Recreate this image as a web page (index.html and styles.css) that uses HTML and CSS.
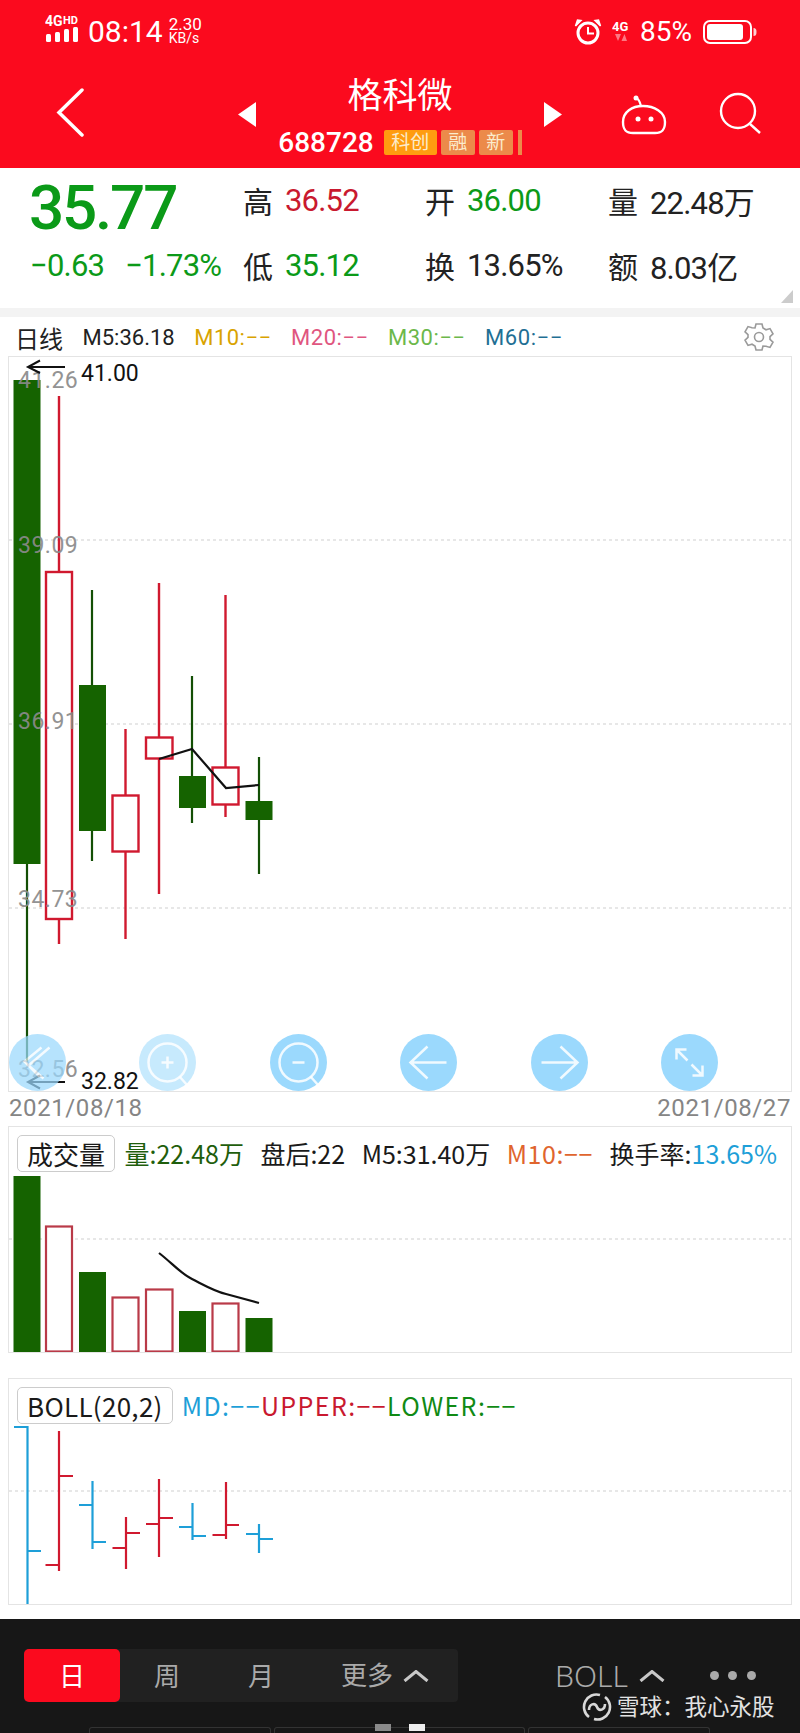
FILE: index.html
```html
<!DOCTYPE html>
<html>
<head>
	<meta charset="utf-8">
	<title>格科微 688728</title>
	<link rel="stylesheet" href="styles.css">
</head>
<body>
<header class="top">
	<div class="status">
		<svg class="signal" width="36" height="28" viewBox="0 0 36 28">
			<text class="sig4g" x="0" y="11">4G</text>
			<text class="sighd" x="18" y="9">HD</text>
			<rect x="1" y="19" width="5" height="8" rx="1.5"/>
			<rect x="10" y="17" width="5" height="10" rx="1.5"/>
			<rect x="19" y="14" width="5" height="13" rx="1.5"/>
			<rect x="28" y="12" width="5" height="15" rx="1.5"/>
		</svg>
		<div class="time">08:14</div>
		<div class="speed"><span>2.30</span><span class="unit">KB/s</span></div>
		<div class="status-right">
			<svg class="alarm" width="28" height="28" viewBox="0 0 28 28">
				<circle cx="14" cy="15" r="10" fill="none" stroke="#fff" stroke-width="3"/>
				<path d="M14 9v6.5h6" fill="none" stroke="#fff" stroke-width="2"/>
				<path d="M1.5 8 7 2.5 3.5 2ZM26.500 8 21 2.500 24.500 2Z" fill="#fff" stroke="#fff" stroke-width="1.500"/>
			</svg>
			<svg class="net" width="18" height="24" viewBox="0 0 18 24">
				<text x="0" y="11">4G</text>
				<path d="M3 14h6l-3 7ZM15 21H9.500l3-7Z" fill="#fff" opacity=".45"/>
			</svg>
			<div class="pct">85%</div>
			<svg class="battery" width="54" height="24" viewBox="0 0 54 24">
				<rect x="1" y="1" width="47" height="22" rx="6" fill="none" stroke="#fff" stroke-width="2"/>
				<rect x="4" y="4" width="36" height="16" rx="3" fill="#fff"/>
				<path d="M50.500 8c2 0 3 1 3 4s-1 4-3 4Z" fill="#fff" opacity=".8"/>
			</svg>
		</div>
	</div>
	<nav class="nav">
		<div class="nav-left">
			<svg width="32" height="50" viewBox="0 0 32 50"><path d="M28 2 5 24.500 28 47" fill="none" stroke="#fff" stroke-width="3.500" stroke-linecap="round"/></svg>
			<svg class="tri" width="18" height="26" viewBox="0 0 18 26"><path d="M18 0 0 12.500 18 25Z" fill="#fff"/></svg>
		</div>
		<div class="nav-mid">
			<div class="stock-name">格科微</div>
			<div class="stock-code">
				<span class="code">688728</span>
				<span class="tag tag-wide">科创</span>
				<span class="tag tag-soft">融</span>
				<span class="tag tag-soft">新</span>
				<span class="tag-cut"></span>
			</div>
		</div>
		<div class="nav-right">
			<svg class="tri" width="18" height="26" viewBox="0 0 18 26"><path d="M0 0 18 12.500 0 25Z" fill="#fff"/></svg>
			<svg class="robot" width="50" height="44" viewBox="0 0 50 44">
				<circle cx="16" cy="4" r="2.500" fill="#fff"/>
				<path d="M16 4c3 1 4 4 5 8" fill="none" stroke="#fff" stroke-width="2.200"/>
				<path d="M3 28c0-10 9-16 20-16s22 6 22 16c0 8-3 11-10 11H13C6 39 3 36 3 28Z" fill="none" stroke="#fff" stroke-width="2.400"/>
				<circle cx="18" cy="25" r="2.500" fill="#fff"/>
				<circle cx="31" cy="25" r="2.500" fill="#fff"/>
			</svg>
			<svg class="search" width="48" height="46" viewBox="0 0 48 46">
				<circle cx="21" cy="20" r="17" fill="none" stroke="#fff" stroke-width="2.400"/>
				<path d="M33 33 43 42" fill="none" stroke="#fff" stroke-width="2.400"/>
			</svg>
		</div>
	</nav>
</header>

<section class="quote">
	<div class="price">35.77</div>
	<div class="q"><span class="ql">高</span><span class="up">36.52</span></div>
	<div class="q"><span class="ql">开</span><span class="down">36.00</span></div>
	<div class="q"><span class="ql">量</span><span>22.48万</span></div>
	<div class="change down"><span>−0.63</span><span>−1.73%</span></div>
	<div class="q"><span class="ql">低</span><span class="down">35.12</span></div>
	<div class="q"><span class="ql">换</span><span>13.65%</span></div>
	<div class="q"><span class="ql">额</span><span>8.03亿</span></div>
	<div class="corner"></div>
</section>
<div class="strip"></div>

<div class="chart-head">
	<span class="day">日线</span>
	<span>M5:36.18</span>
	<span class="c-m10">M10:−−</span>
	<span class="c-m20">M20:−−</span>
	<span class="c-m30">M30:−−</span>
	<span class="c-m60">M60:−−</span>
	<svg class="gear" width="30" height="30" viewBox="0 0 30 30">
		<path d="M12 2h6l1 4 3 1.800 4-1.200 3 5.200-3 2.900v2.600l3 2.900-3 5.200-4-1.200L19 24l-1 4h-6l-1-4-3-1.800-4 1.200-3-5.200 3-2.900v-2.600l-3-2.900 3-5.200 4 1.200L11 6Z" fill="none" stroke="#9a9a9a" stroke-width="1.600"/>
		<circle cx="15" cy="15" r="4.500" fill="none" stroke="#9a9a9a" stroke-width="1.600"/>
	</svg>
</div>

<div class="panel chart">
	<svg class="plot" width="782" height="734" viewBox="9 357 782 734">
		<line class="grid" x1="9" y1="540" x2="791" y2="540"/>
		<line class="grid" x1="9" y1="724" x2="791" y2="724"/>
		<line class="grid" x1="9" y1="908" x2="791" y2="908"/>

		<line class="wick-g" x1="27" y1="864" x2="27" y2="1062"/>
		<rect class="body-g" x="13.500" y="380" width="27" height="484"/>
		<line class="wick-r" x1="59" y1="396" x2="59" y2="944"/>
		<rect class="body-r" x="46" y="572" width="26" height="347"/>
		<line class="wick-g" x1="92" y1="590" x2="92" y2="861"/>
		<rect class="body-g" x="79" y="685" width="27" height="146"/>
		<line class="wick-r" x1="125.500" y1="729" x2="125.500" y2="939"/>
		<rect class="body-r" x="112.500" y="795.500" width="26" height="56"/>
		<line class="wick-r" x1="159" y1="583" x2="159" y2="894"/>
		<rect class="body-r" x="146" y="737.500" width="26.500" height="21"/>
		<line class="wick-g" x1="192" y1="676" x2="192" y2="823"/>
		<rect class="body-g" x="179" y="776" width="27" height="32"/>
		<line class="wick-r" x1="225.500" y1="595" x2="225.500" y2="817"/>
		<rect class="body-r" x="212.500" y="767.500" width="26" height="37"/>
		<line class="wick-g" x1="259" y1="757" x2="259" y2="874"/>
		<rect class="body-g" x="245.500" y="801" width="27" height="19"/>

		<polyline class="ma" points="159,759 192,749 226,788 259,785"/>

		<text class="axis" x="18" y="388">41.26</text>
		<text class="axis" x="18" y="553">39.09</text>
		<text class="axis" x="18" y="729">36.91</text>
		<text class="axis" x="18" y="907">34.73</text>
		<text class="axis" x="18" y="1077">32.56</text>

		<path class="pin" d="M65 367H28M40 360.500 28 367 40 373"/>
		<text class="mark" x="81" y="381">41.00</text>
		<path class="pin" d="M65 1082H28M40 1075.500 28 1082 40 1088.500"/>
		<text class="mark" x="81" y="1089">32.82</text>
	</svg>
	<div class="chart-btns">
		<svg class="btn btn-back" width="57" height="57" viewBox="-28.500 -28.500 57 57">
			<circle r="28.500"/>
			<path d="M12-15-9 3 6 16M4-15-13-1 2 14"/>
		</svg>
		<svg class="btn btn-faint" width="57" height="57" viewBox="-28.500 -28.500 57 57">
			<circle r="28.500"/>
			<circle class="lens" r="19"/>
			<path d="M12 14 20 23M-6 0H6M0-6V6"/>
		</svg>
		<svg class="btn" width="57" height="57" viewBox="-28.500 -28.500 57 57">
			<circle r="28.500"/>
			<circle class="lens" r="19"/>
			<path d="M12 14 20 23M-6 0H6"/>
		</svg>
		<svg class="btn" width="57" height="57" viewBox="-28.500 -28.500 57 57">
			<circle r="28.500"/>
			<path d="M18 0H-18M-1-16-18 0-1 16"/>
		</svg>
		<svg class="btn" width="57" height="57" viewBox="-28.500 -28.500 57 57">
			<circle r="28.500"/>
			<path d="M-18 0H18M1-16 18 0 1 16"/>
		</svg>
		<svg class="btn" width="57" height="57" viewBox="-28.500 -28.500 57 57">
			<circle r="28.500"/>
			<path d="M-13-13-2-2M-13-3V-13H-3M2 2 13 13M13 3V13H3"/>
		</svg>
	</div>
</div>

<div class="dates"><span>2021/08/18</span><span>2021/08/27</span></div>

<div class="panel vol">
	<div class="panel-head">
		<span class="pill">成交量</span>
		<span class="c-dgreen">量:22.48万</span>
		<span>盘后:22</span>
		<span>M5:31.40万</span>
		<span class="c-orange">M10:−−</span>
		<span>换手率:<span class="c-blue">13.65%</span></span>
	</div>
	<svg class="plot" width="782" height="177" viewBox="9 1175 782 177">
		<line class="grid" x1="9" y1="1239" x2="791" y2="1239"/>
		<rect class="body-g" x="13.500" y="1176" width="27" height="176"/>
		<rect class="vol-r" x="46" y="1226.500" width="26" height="125"/>
		<rect class="body-g" x="79" y="1272" width="27" height="80"/>
		<rect class="vol-r" x="112.500" y="1297.500" width="26" height="54"/>
		<rect class="vol-r" x="146" y="1289.500" width="26.500" height="62"/>
		<rect class="body-g" x="179" y="1311" width="27" height="41"/>
		<rect class="vol-r" x="212.500" y="1303.500" width="26" height="48"/>
		<rect class="body-g" x="245.500" y="1318" width="27" height="34"/>
		<path class="ma" d="M159 1253C172 1263 180 1273 192 1279 204 1285 214 1291 226 1294L259 1303"/>
	</svg>
</div>

<div class="panel boll">
	<div class="panel-head">
		<span class="pill pill-boll">BOLL(20,2)</span>
		<span class="boll-vals"><span class="c-blue">MD:−−</span><span class="c-red">UPPER:−−</span><span class="c-lgreen">LOWER:−−</span></span>
	</div>
	<svg class="plot" width="782" height="178" viewBox="9 1426 782 178">
		<line class="grid" x1="9" y1="1491" x2="791" y2="1491"/>
		<path class="bar-b" d="M27.500 1604V1427H14M27.500 1551H41"/>
		<path class="bar-r" d="M59 1431V1571M45.500 1565H59M59 1476H73"/>
		<path class="bar-b" d="M92.500 1481V1549M79 1505H92.500M92.500 1542H106"/>
		<path class="bar-r" d="M126 1517V1569M112.500 1548H126M126 1533H140"/>
		<path class="bar-r" d="M159 1479V1557M146 1524H159M159 1518H173"/>
		<path class="bar-b" d="M192.500 1503V1540M179 1527H192.500M192.500 1536H206"/>
		<path class="bar-r" d="M226 1482V1539M212.500 1535H226M226 1525H239"/>
		<path class="bar-b" d="M259 1524V1553M246 1534H259M259 1539H273"/>
	</svg>
</div>

<footer class="foot">
	<div class="tools">
		<div class="periods">
			<div class="period on">日</div>
			<div class="period">周</div>
			<div class="period">月</div>
			<div class="period more">更多
				<svg class="caret" width="26" height="12" viewBox="0 0 26 12"><path d="M1.500 11 13 1.500 24.500 11"/></svg>
			</div>
		</div>
		<div class="boll-pick">BOLL
			<svg class="caret" width="26" height="12" viewBox="0 0 26 12"><path d="M1.500 11 13 1.500 24.500 11"/></svg>
		</div>
		<div class="dots"><i></i><i></i><i></i></div>
	</div>
	<div class="cards"><div class="card c1"></div><div class="card c2"></div><div class="card c1"></div></div>
	<div class="pager"><i></i><i class="cur"></i></div>
	<div class="watermark">
		<svg width="30" height="30" viewBox="0 0 30 30">
			<path d="M18 3A12.500 12.500 0 0 0 7 25M7 18C7 12 13 10 15 15M12 27A12.500 12.500 0 0 0 23 5M23 12C23 18 17 20 15 15" fill="none" stroke="#d8d8d8" stroke-width="2.600"/>
		</svg>
		<span>雪球：我心永股</span>
	</div>
</footer>
</body>
</html>
```

FILE: styles.css
```css
body {
	margin: 0;
	width: 800px;
	height: 1733px;
	overflow: hidden;
	background: #fff;
	color: #222;
	font-family: Roboto, "Noto Sans CJK SC", sans-serif;
}
svg {
	display: block;
	flex: none;
}

/* red header */
.top {
	height: 168px;
	background: #fb0a1e;
	color: #fff;
}
.status {
	display: flex;
	align-items: flex-start;
	height: 58px;
	padding: 0 43px 0 45px;
}
.signal {
	margin-top: 15px;
	fill: #fff;
}
.sig4g {
	font: bold 14px Roboto, sans-serif;
}
.sighd {
	font: bold 11px Roboto, sans-serif;
}
.time {
	margin: 17px 0 0 7px;
	font-size: 30px;
	line-height: 30px;
}
.speed {
	display: flex;
	flex-direction: column;
	margin: 17px 0 0 6px;
	font-size: 17px;
	line-height: 15px;
}
.unit {
	font-size: 14px;
	line-height: 13px;
}
.status-right {
	display: flex;
	align-items: center;
	margin: 18px 0 0 auto;
	height: 28px;
}
.net {
	margin-left: 10px;
}
.net text {
	fill: #fff;
	font: bold 13px Roboto, sans-serif;
}
.pct {
	margin-left: 10px;
	font-size: 28px;
	line-height: 28px;
}
.battery {
	margin-left: 11px;
}
.nav {
	display: grid;
	grid-template-columns: 256px 288px 256px;
	height: 110px;
}
.nav-left {
	display: flex;
	align-items: center;
	justify-content: space-between;
	padding-left: 54px;
}
.nav-right {
	display: flex;
	align-items: center;
}
.tri {
	margin-top: 3px;
}
.robot {
	margin: 0 0 -6px 58px;
}
.search {
	margin: 0 0 -2px 47px;
}
.nav-mid {
	display: flex;
	flex-direction: column;
	align-items: center;
	padding-top: 14px;
}
.stock-name {
	height: 50px;
	font-size: 35px;
	line-height: 50px;
}
.stock-code {
	display: flex;
	align-items: center;
	margin-top: 8px;
	height: 25px;
}
.code {
	margin-right: 10px;
	font-size: 28px;
	font-weight: 500;
	line-height: 25px;
}
.tag {
	height: 25px;
	margin-right: 4px;
	font-size: 19px;
	line-height: 25px;
	text-align: center;
	color: #fbeccd;
	border-radius: 2px;
}
.tag-wide {
	width: 53px;
	background: #ff9c10;
}
.tag-soft {
	width: 34px;
	background: #ec8a4a;
}
.tag-cut {
	width: 4px;
	height: 25px;
	margin-left: 1px;
	background: #ec8a4a;
}

/* quote block */
.quote {
	position: relative;
	display: grid;
	grid-template-columns: 213px 182px 183px 192px;
	grid-template-rows: 64px 66px;
	height: 140px;
	padding-left: 30px;
	box-sizing: border-box;
	font-size: 31px;
	letter-spacing: -.8px;
}
.price {
	margin: 15px 0 0 -1px;
	font-size: 62px;
	font-weight: 500;
	line-height: 50px;
	letter-spacing: -2.2px;
	color: #0b9a18;
}
.q {
	display: flex;
	align-items: center;
	gap: 12px;
}
.ql {
	font-size: 30px;
	letter-spacing: 0;
}
.up {
	color: #c9192f;
}
.down {
	color: #0b9a18;
}
.change {
	display: flex;
	align-items: center;
	gap: 21px;
}
.corner {
	position: absolute;
	right: 7px;
	bottom: 5px;
	border-style: solid;
	border-width: 0 0 13px 12px;
	border-color: transparent transparent #ccc transparent;
}
.strip {
	height: 9px;
	background: #f3f3f3;
}

/* day chart */
.chart-head {
	display: flex;
	align-items: center;
	gap: 19.500px;
	height: 40px;
	padding: 0 26px 0 15px;
	font-size: 22px;
	color: #222;
}
.day {
	font-size: 24px;
}
.gear {
	margin-left: auto;
}
.c-m10 {
	color: #d9a300;
	letter-spacing: .5px;
}
.c-m20 {
	color: #e0567f;
	letter-spacing: .5px;
}
.c-m30 {
	color: #6cb84a;
	letter-spacing: .5px;
}
.c-m60 {
	color: #1f6f94;
	letter-spacing: .6px;
}
.panel {
	position: relative;
	width: 782px;
	margin-left: 9px;
	outline: 1px solid #e4e4e4;
	box-sizing: border-box;
}
.chart {
	height: 734px;
}
.plot line,
.plot rect,
.plot path,
.plot polyline {
	fill: none;
}
.grid {
	stroke: #cfcfcf;
	stroke-width: 1;
	stroke-dasharray: 3 3;
}
.plot .body-g {
	fill: #156300;
}
.plot .body-r {
	fill: #fff;
	stroke: #d0192f;
	stroke-width: 2.400;
}
.wick-g {
	stroke: #134f05;
	stroke-width: 2.200;
}
.wick-r {
	stroke: #d0192f;
	stroke-width: 2.400;
}
.ma {
	stroke: #111;
	stroke-width: 2.200;
}
.axis {
	font-size: 23px;
	letter-spacing: .5px;
	fill: #8a8a8a;
	opacity: .92;
}
.mark {
	font-size: 23px;
	fill: #111;
}
.pin {
	stroke: #111;
	stroke-width: 2;
}
.chart-btns {
	position: absolute;
	left: 0;
	bottom: 0;
	display: flex;
	gap: 73.4px;
}
.btn circle {
	fill: #9bd9fd;
}
.btn path,
.btn .lens {
	fill: none;
	stroke: #fff;
	stroke-width: 2.500;
	stroke-opacity: .85;
}
.btn-back {
	opacity: .72;
}
.btn-faint {
	opacity: .55;
}
.dates {
	display: flex;
	justify-content: space-between;
	height: 36px;
	padding: 0 9px;
	font-size: 24px;
	line-height: 34px;
	letter-spacing: .6px;
	color: #858585;
}

/* volume and boll */
.vol {
	height: 225px;
}
.boll {
	height: 225px;
	margin-top: 27px;
}
.panel-head {
	display: flex;
	align-items: center;
	gap: 16.500px;
	height: 36px;
	padding: 8px 0 4px 8px;
	font-family: "Noto Sans CJK SC", sans-serif;
	font-size: 25px;
	color: #1a1a1a;
}
.boll .panel-head {
	gap: 9px;
	padding: 8px 0 3px 8px;
}
.pill {
	height: 35px;
	padding: 0 9px;
	border: 1px solid #ccc;
	border-radius: 5px;
	font-size: 26px;
	line-height: 35px;
}
.pill-boll {
	letter-spacing: .3px;
}
.vol .pill {
	margin-right: -7px;
}
.c-dgreen {
	color: #1f5e0c;
}
.c-orange {
	color: #e0652e;
	letter-spacing: .6px;
}
.c-blue {
	color: #1e9fd8;
}
.c-red {
	color: #c9192f;
}
.c-lgreen {
	color: #108a14;
}
.boll-vals {
	display: flex;
	letter-spacing: 1.400px;
}
.plot .vol-r {
	fill: #fff;
	stroke: #b93a48;
	stroke-width: 2.200;
}
.bar-b {
	stroke: #1e9fd8;
	stroke-width: 2.200;
}
.bar-r {
	stroke: #d0192f;
	stroke-width: 2.200;
}

/* bottom bar */
.foot {
	position: relative;
	height: 114px;
	margin-top: 15px;
	padding-top: 30px;
	box-sizing: border-box;
	background: #171717;
	color: #aaa;
}
.tools {
	display: flex;
	align-items: center;
	height: 53px;
	padding-left: 24px;
}
.periods {
	display: flex;
	width: 434px;
	height: 53px;
	background: #212121;
	border-radius: 4px;
	font-size: 26px;
	line-height: 56px;
}
.period {
	width: 94px;
	text-align: center;
}
.period.on {
	width: 96px;
	background: #fb0a1e;
	border-radius: 5px;
	color: #fff;
}
.more {
	display: flex;
	align-items: center;
	width: 150px;
	padding-left: 33px;
	box-sizing: border-box;
}
.caret {
	margin-left: 10px;
	fill: none;
	stroke: #c8c8c8;
	stroke-width: 3;
}
.boll-pick {
	display: flex;
	align-items: center;
	margin-left: 97px;
	font-size: 30px;
	font-weight: 300;
	font-family: "Noto Sans", sans-serif;
}
.boll-pick .caret {
	margin-left: 11px;
}
.dots {
	display: flex;
	gap: 9.500px;
	margin-left: 45px;
}
.dots i {
	width: 9px;
	height: 9px;
	border-radius: 50%;
	background: #aaa;
}
.cards {
	display: flex;
	gap: 3px;
	margin: 25px 0 0 89px;
}
.card {
	height: 10px;
	border: 1px solid #333;
	border-bottom: none;
	border-radius: 3px 3px 0 0;
	box-sizing: border-box;
}
.c1 {
	width: 182px;
}
.c2 {
	width: 251px;
}
.pager {
	position: absolute;
	top: 105px;
	left: 375px;
	display: flex;
	gap: 18px;
}
.pager i {
	width: 16px;
	height: 7px;
	background: #8a8a8a;
}
.pager .cur {
	background: #eee;
}
.watermark {
	position: absolute;
	top: 73px;
	left: 582px;
	display: flex;
	align-items: center;
	gap: 5px;
	font-size: 22.5px;
	line-height: 30px;
	color: #e2e2e2;
}
```
